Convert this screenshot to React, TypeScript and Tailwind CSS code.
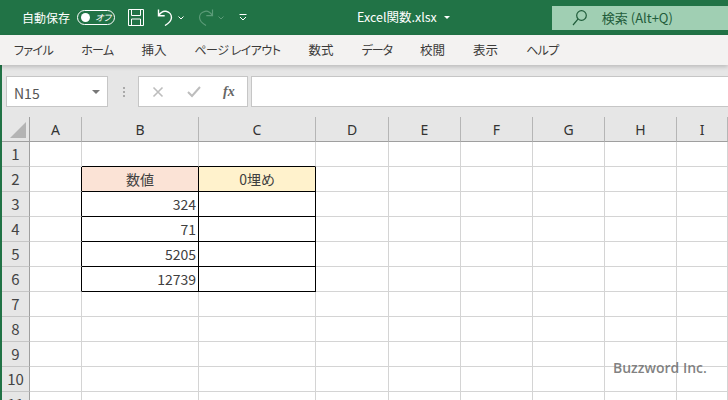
import React from 'react';

const jp = "font-['Noto_Sans_CJK_JP','Noto_Sans',sans-serif]";
const tabs = [
  { label: 'ファイル', cls: 'text-[12px] tracking-[-0.6px]' },
  { label: 'ホーム', cls: 'text-[12px] tracking-[-0.7px]' },
  { label: '挿入', cls: 'text-[12.5px]' },
  { label: 'ページ レイアウト', cls: 'text-[12px] tracking-[-0.5px]' },
  { label: '数式', cls: 'text-[12.5px]' },
  { label: 'データ', cls: 'text-[12px] tracking-[-1px]' },
  { label: '校閲', cls: 'text-[12.5px]' },
  { label: '表示', cls: 'text-[12.5px]' },
  { label: 'ヘルプ', cls: 'text-[12px] tracking-[-0.7px]' },
];
const columns = ['A', 'B', 'C', 'D', 'E', 'F', 'G', 'H', 'I'];
const rows = [1, 2, 3, 4, 5, 6, 7, 8, 9, 10, 11];
const values: Record<number, string> = { 3: '324', 4: '71', 5: '5205', 6: '12739' };

const Cell: React.FC<{ col: string; row: number }> = ({ col, row }) => {
  const inTable = (col === 'B' || col === 'C') && row >= 1 && row <= 6;
  const right = (col === 'A' || col === 'B' || col === 'C') && row >= 2 && row <= 6;
  const bottomClass = inTable ? 'border-b-black' : 'border-b-[#d4d4d4]';
  const rightClass = right ? 'border-r-black' : 'border-r-[#d4d4d4]';
  const fill = row === 2 && col === 'B' ? 'bg-[#fbe3d6]' : row === 2 && col === 'C' ? 'bg-[#fff2cc]' : 'bg-white';
  return (
    <div className={`flex items-center border-r border-b px-0.5 text-[14px] text-[#404040] ${bottomClass} ${rightClass} ${fill} ${row === 2 ? 'justify-center' : 'justify-end'}`}>
      {row === 2 && col === 'B' && '数値'}
      {row === 2 && col === 'C' && '0埋め'}
      {col === 'B' && values[row]}
    </div>
  );
};

export default function App() {
  return (
    <div className={`flex h-[400px] w-[728px] flex-col overflow-hidden bg-white ${jp} [font-feature-settings:'palt']`}>
      <div className="flex h-[35px] shrink-0 items-center bg-[#217346] text-white">
        <span className="ml-[22px] text-[12px]">自動保存</span>
        <div className="ml-[7px] flex h-[15px] w-[38px] items-center justify-between rounded-full border border-white pl-[3px] pr-[3px]">
          <span className="h-[9px] w-[9px] rounded-full bg-white" />
          <span className="text-[9px] italic leading-none">オフ</span>
        </div>
        <svg className="ml-[13px]" width="16" height="17" viewBox="0 0 16 17" fill="none" stroke="#ffffff" strokeWidth="1">
          <path d="M.5.500h15v16H.5zM3.500.500v6h9v-6M3.500 16.500v-6.500h9v6.500" />
        </svg>
        <svg className="ml-[13px]" width="16" height="17" viewBox="0 0 16 17" fill="none" stroke="#ffffff" strokeWidth="1.400">
          <path d="M1.500.500v6.200h6.200M1.700 6.500C3.800 3.200 6.500 1.800 9 2.300c3.500.7 5.700 3.500 5.400 6.700-.2 2.700-2.300 5.200-6.400 7.500" />
        </svg>
        <svg className="ml-[5px]" width="6" height="4" viewBox="0 0 6 4" fill="none" stroke="#ffffff" strokeWidth="1">
          <path d="M.5.500 3 3 5.500.500" />
        </svg>
        <svg className="ml-[14px]" width="16" height="17" viewBox="0 0 16 17" fill="none" stroke="#5b9b78" strokeWidth="1.200">
          <path d="M14.500.500v6.200H8.300M14.300 6.500C12.200 3.200 9.500 1.800 7 2.300 3.500 3 1.300 5.800 1.600 9c.2 2.700 2.300 5.200 6.400 7.500" />
        </svg>
        <svg className="ml-[4px]" width="6" height="4" viewBox="0 0 6 4" fill="none" stroke="#5b9b78" strokeWidth="1">
          <path d="M.5.500 3 3 5.500.500" />
        </svg>
        <svg className="ml-[15px]" width="8" height="7" viewBox="0 0 8 7" fill="none" stroke="#ffffff" strokeWidth="1">
          <path d="M.5.500h7M1 3l3 3 3-3" />
        </svg>
        <span className="ml-[110px] text-[12.5px] leading-none">Excel関数.xlsx</span>
        <span className="ml-[7px] h-0 w-0 border-x-[3px] border-t-[3px] border-x-transparent border-t-white" />
        <div className="ml-[102px] mb-[5px] flex h-[24px] flex-1 items-center self-end bg-[#a0cfb3] pl-[20px] text-[#1f5c3a]">
          <svg width="15" height="16" viewBox="0 0 15 16" fill="none" stroke="#1f5c3a" strokeWidth="1.200">
            <circle cx="9.500" cy="5.500" r="4.800" />
            <path d="M6 9.200 1 15" />
          </svg>
          <span className="ml-[15px] text-[13px]">検索 (Alt+Q)</span>
        </div>
      </div>

      <div className="relative z-10 flex h-[30px] shrink-0 items-center gap-[28px] bg-[#f3f2f1] pl-[14px] text-[#3b3a39] shadow-[0_2px_4px_rgba(0,0,0,0.18)]">
        {tabs.map((t) => (
          <span key={t.label} className={t.cls}>{t.label}</span>
        ))}
      </div>

      <div className="flex min-h-0 flex-1 flex-col border-l-2 border-[#217346]">
        <div className="flex h-[52px] shrink-0 items-center bg-[#e6e6e6] pl-[4px] pt-[1px]">
          <div className="flex h-[31px] w-[102px] items-center justify-between border border-[#c6c6c6] bg-white pl-[7px] pr-[7px] text-[14px] text-[#555]">
            <span className="pt-[3px]">N15</span>
            <span className="h-0 w-0 border-x-[4px] border-t-[4px] border-x-transparent border-t-[#777]" />
          </div>
          <div className="ml-[15px] flex flex-col gap-[2px]">
            <span className="h-[2px] w-[2px] bg-[#aaa]" />
            <span className="h-[2px] w-[2px] bg-[#aaa]" />
            <span className="h-[2px] w-[2px] bg-[#aaa]" />
          </div>
          <div className="ml-[13px] flex h-[31px] w-[110px] items-center border border-[#c6c6c6] bg-white">
            <svg className="ml-[13px]" width="12" height="12" viewBox="0 0 12 12" stroke="#bdbdbd" strokeWidth="1.600">
              <path d="m1.500 1.500 9 9M10.500 1.500l-9 9" />
            </svg>
            <svg className="ml-[23px]" width="14" height="12" viewBox="0 0 14 12" fill="none" stroke="#bdbdbd" strokeWidth="2">
              <path d="m1 6 4 4 8-9" />
            </svg>
            <span className="ml-[22px] font-['Liberation_Serif',serif] text-[14px] font-bold italic leading-none text-[#666]">fx</span>
          </div>
          <div className="ml-[3px] h-[31px] flex-1 border border-r-0 border-[#c6c6c6] bg-white" />
        </div>

        <div className="relative grid min-h-0 flex-1 grid-cols-[28px_52px_117px_117px_73px_72px_72px_72px_72px_1fr] auto-rows-[25px] overflow-hidden">
          <div className="relative border-r border-b border-[#9f9f9f] bg-[#e6e6e6]">
            <span className="absolute right-[3px] bottom-[3px] h-0 w-0 border-b-[16px] border-l-[16px] border-b-[#b4b4b4] border-l-transparent" />
          </div>
          {columns.map((c) => (
            <div key={c} className="flex items-center justify-center border-r border-b border-r-[#b5b5b5] border-b-[#9f9f9f] bg-[#e6e6e6] font-['Noto_Sans',sans-serif] text-[14px] text-[#333]">
              {c}
            </div>
          ))}
          {rows.map((r) => (
            <React.Fragment key={r}>
              <div className="flex items-center justify-center border-r border-b border-r-[#9f9f9f] border-b-[#c6c6c6] bg-[#e6e6e6] text-[15px] text-[#444]">
                {r}
              </div>
              {columns.map((c) => (
                <Cell key={c} col={c} row={r} />
              ))}
            </React.Fragment>
          ))}
          <span className="absolute left-[611px] top-[240px] font-['Open_Sans',sans-serif] text-[14px] font-semibold text-[#6b6b6b]/85">
            Buzzword Inc.
          </span>
        </div>
      </div>
    </div>
  );
}
